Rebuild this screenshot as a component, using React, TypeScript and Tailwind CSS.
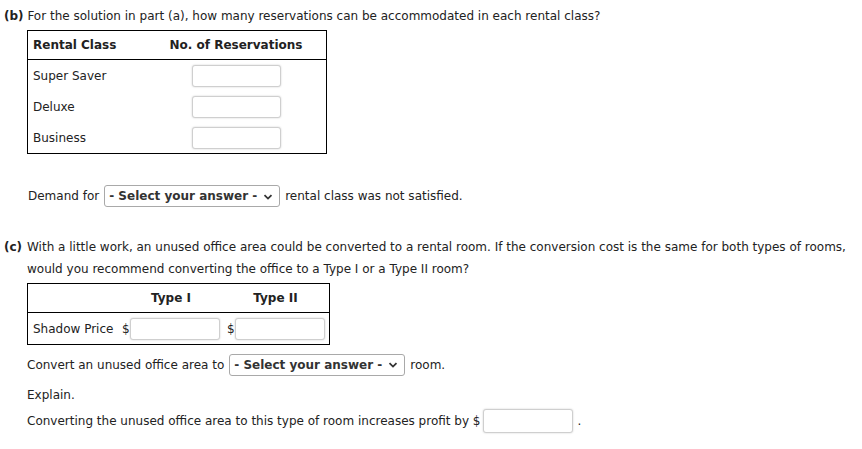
function Box({ className = "" }: { className?: string }) {
  return (
    <div
      className={`h-[22px] w-[89px] rounded-[3px] border border-[#cfcfcf] bg-white shadow-[0_0_2px_rgba(0,0,0,0.2)] ${className}`}
    />
  );
}

function Picker() {
  return (
    <span className="mx-[5px] inline-flex h-[22px] w-[176px] items-center justify-between rounded-[3px] border border-[#a9a9a9] bg-white pl-[4px] pr-[6px] align-middle font-bold text-[#333]">
      <span>- Select your answer -</span>
      <svg width="10" height="8" viewBox="0 0 10 8" className="mt-[1px]">
        <path d="M1.5 2.2 L5 5.6 L8.5 2.2" fill="none" stroke="#333" strokeWidth="1.8" />
      </svg>
    </span>
  );
}

export default function App() {
  return (
    <div className="h-[449px] w-[862px] overflow-hidden bg-white text-[12px] leading-[18px] text-[#222]" style={{ fontFamily: "'DejaVu Sans', Verdana, sans-serif" }}>
      {/* part b */}
      <p className="pl-[4px] pt-[7px]">
        <b>(b)</b> For the solution in part (a), how many reservations can be accommodated in each rental class?
      </p>

      <div className="ml-[27px] mt-[5px] w-[300px] border border-black">
        <div className="grid h-[29px] grid-cols-[118px_1fr] items-center border-b border-black font-bold">
          <span className="pl-[5px]">Rental Class</span>
          <span className="text-center">No. of Reservations</span>
        </div>
        {["Super Saver", "Deluxe", "Business"].map((name) => (
          <div key={name} className="grid h-[31px] grid-cols-[118px_1fr] items-center">
            <span className="pl-[5px]">{name}</span>
            <Box className="mx-auto" />
          </div>
        ))}
      </div>

      <div className="ml-[28px] mt-[31px] flex h-[22px] items-center">
        <span>Demand for</span>
        <Picker />
        <span>rental class was not satisfied.</span>
      </div>

      {/* part c */}
      <div className="mt-[29px] flex pl-[4px] leading-[22px]">
        <b className="w-[23px] shrink-0">(c)</b>
        <p className="whitespace-nowrap">
          With a little work, an unused office area could be converted to a rental room. If the conversion cost is the same for both types of rooms,
          <br />
          would you recommend converting the office to a Type I or a Type II room?
        </p>
      </div>

      <div className="ml-[27px] mt-[3px] w-[303px] border border-black">
        <div className="grid h-[29px] grid-cols-[92px_102px_1fr] items-center border-b border-black font-bold">
          <span />
          <span className="text-center">Type I</span>
          <span className="text-center">Type II</span>
        </div>
        <div className="grid h-[31px] grid-cols-[92px_102px_1fr] items-center">
          <span className="pl-[5px]">Shadow Price</span>
          <div className="flex items-center pl-[2px]">
            <span>$</span>
            <Box className="w-[90px]" />
          </div>
          <div className="flex items-center pl-[5px]">
            <span>$</span>
            <Box className="w-[90px]" />
          </div>
        </div>
      </div>

      <div className="ml-[27px] mt-[8px] flex h-[23px] items-center">
        <span>Convert an unused office area to</span>
        <Picker />
        <span>room.</span>
      </div>

      <p className="ml-[27px] mt-[10px]">Explain.</p>

      <div className="ml-[27px] mt-[5px] flex h-[24px] items-center">
        <span>Converting the unused office area to this type of room increases profit by $</span>
        <Box className="ml-[3px] h-[24px] w-[90px]" />
        <span className="ml-[4px]">.</span>
      </div>
    </div>
  );
}
